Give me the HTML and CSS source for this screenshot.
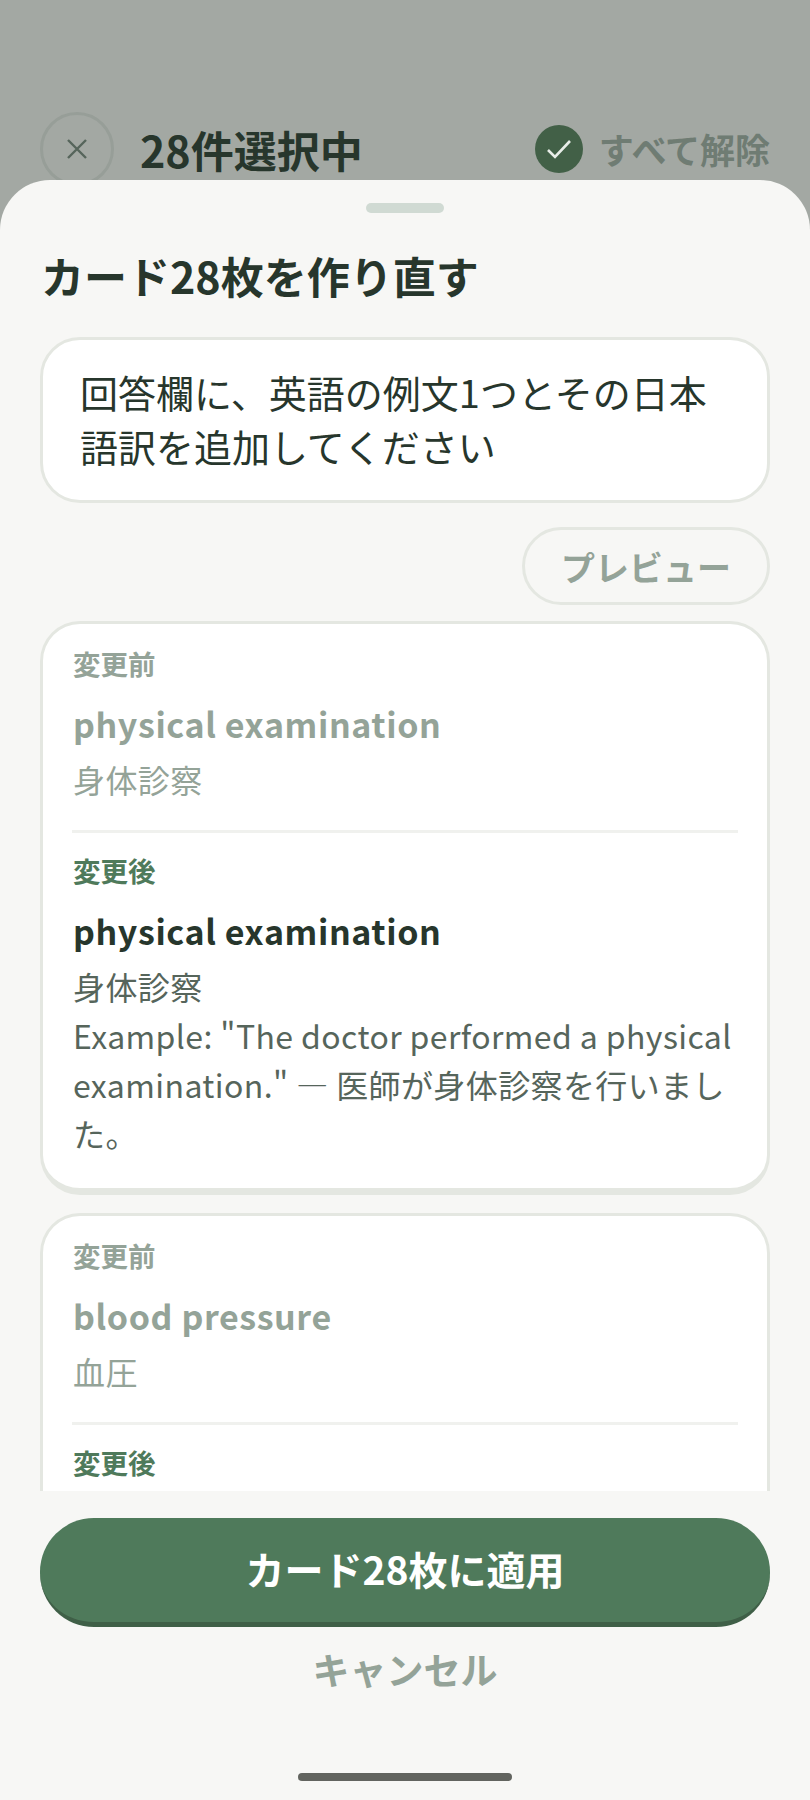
FILE: index.html
```html
<!DOCTYPE html>
<html lang="ja">
<head>
    <meta charset="UTF-8">
    <title>カード28枚を作り直す</title>
    <link rel="stylesheet" href="styles.css">
</head>
<body>
    <header class="select-bar">
        <button class="close-btn">
            <svg width="22" height="22" viewBox="0 0 22 22"><path d="M2 2l18 18M20 2L2 20"/></svg>
        </button>
        <div class="select-count">28件選択中</div>
        <div class="check-badge">
            <svg width="26" height="20" viewBox="0 0 26 20"><path d="M2 11l7 7L24 2"/></svg>
        </div>
        <div class="clear-all">すべて解除</div>
    </header>

    <section class="sheet">
        <div class="handle"></div>
        <h1 class="sheet-title">カード28枚を作り直す</h1>
        <div class="prompt">回答欄に、英語の例文1つとその日本語訳を追加してください</div>
        <div class="preview-row">
            <button class="preview-btn">プレビュー</button>
        </div>

        <div class="card-list">
            <article class="card">
                <div class="label">変更前</div>
                <div class="term muted">physical examination</div>
                <div class="answer muted">身体診察</div>
                <hr class="divider">
                <div class="label after">変更後</div>
                <div class="term">physical examination</div>
                <div class="answer">身体診察<br>Example: "The doctor performed a physical examination." — 医師が身体診察を行いました。</div>
            </article>
            <article class="card">
                <div class="label">変更前</div>
                <div class="term muted">blood pressure</div>
                <div class="answer muted">血圧</div>
                <hr class="divider">
                <div class="label after">変更後</div>
                <div class="term">blood pressure</div>
                <div class="answer">血圧</div>
            </article>
        </div>

        <footer class="actions">
            <button class="apply-btn">カード28枚に適用</button>
            <button class="cancel-btn">キャンセル</button>
            <div class="home-bar"></div>
        </footer>
    </section>
</body>
</html>
```

FILE: styles.css
```css
* {
    margin: 0;
    padding: 0;
    box-sizing: border-box;
    font-family: "Noto Sans CJK JP", "Noto Sans", sans-serif;
}

html, body {
    width: 810px;
    height: 1800px;
    overflow: hidden;
}

body {
    background: #a3a8a3;
    display: flex;
    flex-direction: column;
    color: #27362c;
}

button {
    background: none;
    border: none;
}

/* Dimmed bar behind the sheet */
.select-bar {
    height: 180px;
    flex-shrink: 0;
    padding: 112px 40px 0;
    display: flex;
    align-items: flex-start;
}

.close-btn {
    width: 74px;
    height: 74px;
    flex-shrink: 0;
    border: 3px solid #979e98;
    border-radius: 50%;
    display: flex;
    align-items: center;
    justify-content: center;
}

.close-btn path {
    fill: none;
    stroke: #56655b;
    stroke-width: 2.4;
}

.select-count {
    margin-left: 26px;
    font-size: 43px;
    line-height: 74px;
    font-weight: 700;
}

.check-badge {
    margin: 13px 0 0 auto;
    width: 48px;
    height: 48px;
    border-radius: 50%;
    background: #426047;
    display: flex;
    align-items: center;
    justify-content: center;
}

.check-badge path {
    fill: none;
    stroke: #e8ede8;
    stroke-width: 2.6;
}

.clear-all {
    margin-left: 16px;
    font-size: 35px;
    line-height: 74px;
    font-weight: 700;
    color: #6f7c73;
}

/* Bottom sheet */
.sheet {
    flex: 1;
    min-height: 0;
    background: #f7f7f5;
    border-radius: 50px 50px 0 0;
    padding: 23px 40px 0;
    display: flex;
    flex-direction: column;
}

.handle {
    width: 78px;
    height: 10px;
    margin: 0 auto;
    flex-shrink: 0;
    border-radius: 5px;
    background: #d0dad3;
}

.sheet-title {
    margin-top: 32px;
    padding-left: 1px;
    font-size: 43px;
    line-height: 60px;
    font-weight: 700;
}

.prompt {
    margin-top: 32px;
    padding: 25px 37px 27px;
    background: #fff;
    border: 3px solid #e4e7e1;
    border-radius: 40px;
    font-size: 38px;
    line-height: 54px;
}

.preview-row {
    margin-top: 24px;
    display: flex;
    justify-content: flex-end;
}

.preview-btn {
    height: 78px;
    padding: 0 36px;
    border: 3px solid #e4e7e1;
    border-radius: 39px;
    font-size: 34px;
    font-weight: 700;
    color: #94a398;
}

.card-list {
    flex: 1;
    min-height: 0;
    margin-top: 16px;
    overflow: hidden;
}

.card {
    margin-bottom: 18px;
    padding: 20px 30px 30px;
    background: #fff;
    border: 3px solid #e4e7e1;
    border-bottom-width: 7px;
    border-radius: 40px;
}

.label {
    font-size: 27.5px;
    line-height: 38px;
    font-weight: 700;
    color: #94a398;
}

.label.after {
    color: #4f7a5b;
}

.term {
    margin-top: 20px;
    font-size: 34px;
    line-height: 44px;
    font-weight: 700;
    letter-spacing: 0.6px;
}

.answer {
    margin-top: 9px;
    font-size: 32px;
    line-height: 49px;
    letter-spacing: 0.4px;
    color: #56655b;
}

.muted {
    color: #94a398;
}

.divider {
    margin: 26px -1px 18px;
    border: none;
    height: 3px;
    background: #f0f1ee;
}

/* Sticky actions */
.actions {
    flex-shrink: 0;
    height: 309px;
    padding-top: 27px;
    display: flex;
    flex-direction: column;
    align-items: center;
}

.apply-btn {
    width: 100%;
    height: 109px;
    flex-shrink: 0;
    padding-bottom: 5px;
    border-radius: 54px;
    background: #4f7a5b;
    border-bottom: 5px solid #3f5f47;
    font-size: 39px;
    font-weight: 700;
    color: #fff;
}

.cancel-btn {
    margin-top: 17px;
    font-size: 37px;
    line-height: 50px;
    font-weight: 700;
    color: #94a398;
}

.home-bar {
    margin-top: 79px;
    width: 214px;
    height: 8px;
    flex-shrink: 0;
    border-radius: 4px;
    background: #62645f;
}
```
